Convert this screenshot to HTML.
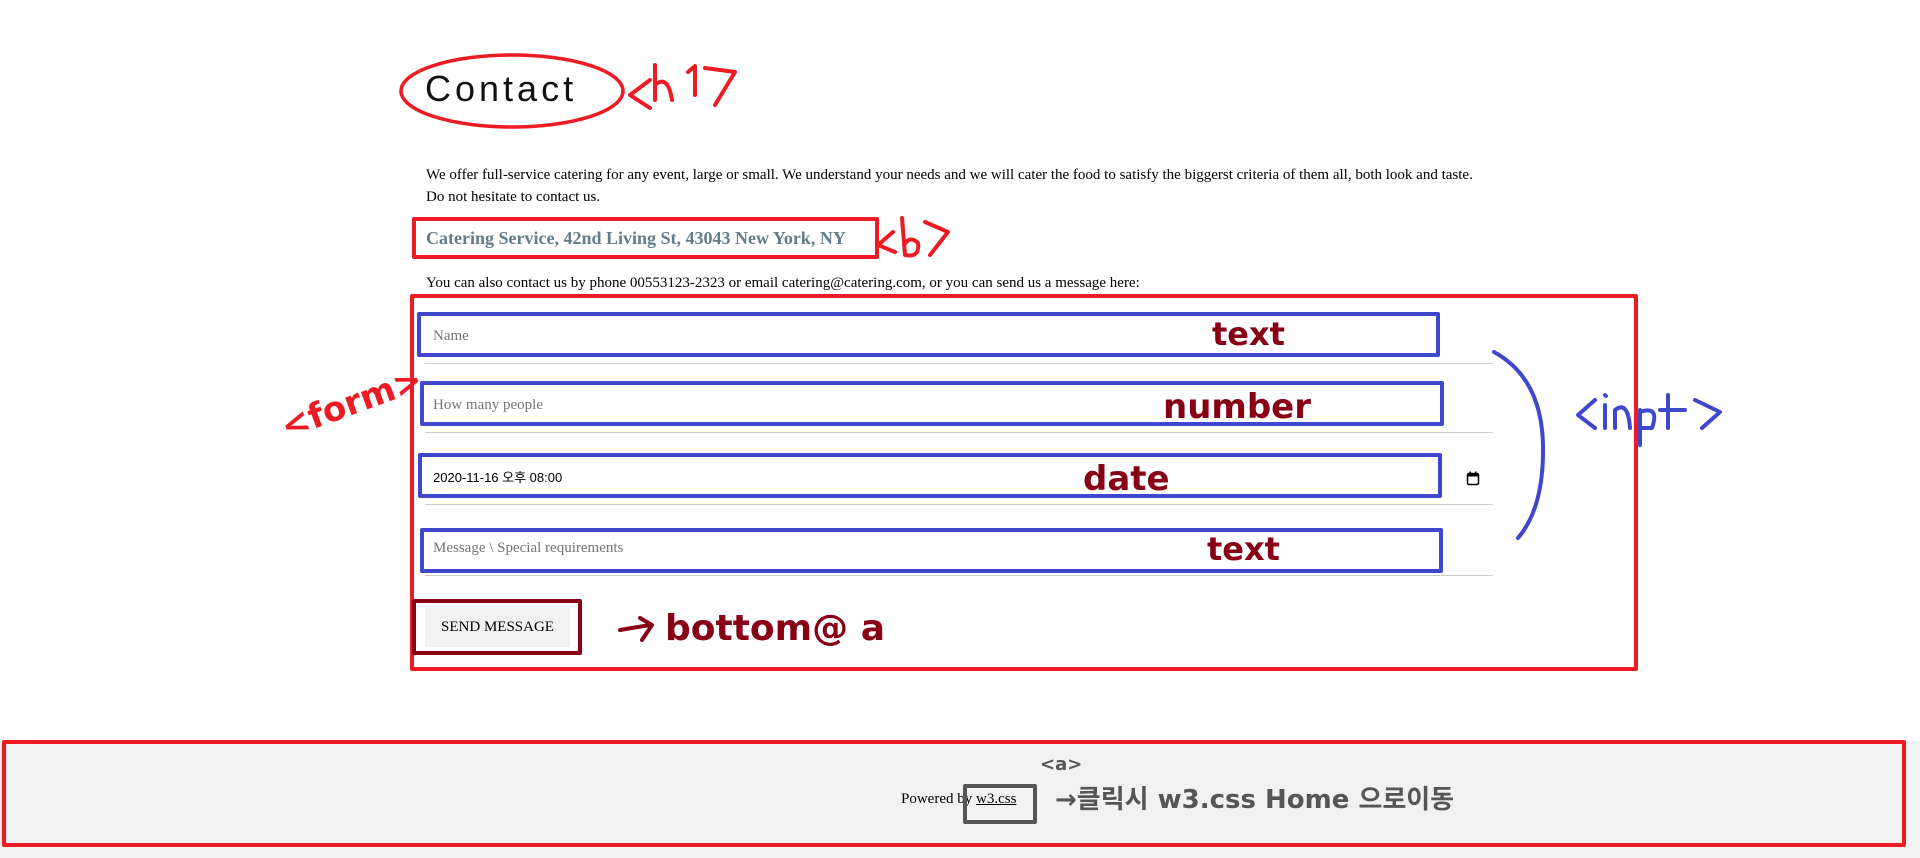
<!DOCTYPE html>
<html><head><meta charset="utf-8"><style>
*{box-sizing:border-box;margin:0;padding:0}
html,body{width:1920px;height:858px;overflow:hidden;background:#fff;font-family:"Liberation Serif","Noto Serif CJK SC",serif;font-size:15px;color:#000}
.abs{position:absolute}
h1{position:absolute;left:425px;top:68px;font-family:"Liberation Sans",sans-serif;font-weight:300;font-size:36px;letter-spacing:4px;color:#111}
.p{position:absolute;left:426px;line-height:22px}
.b{position:absolute;left:426px;top:228px;font-weight:bold;font-size:18px;color:#607d8b}
.in{position:absolute;left:425px;width:1068px;height:39px;border-bottom:1px solid #ccc;padding:0 8px;line-height:22px;color:#757575}
.btn{position:absolute;left:425px;top:608px;width:145px;height:39px;background:#f1f1f1;text-align:center;line-height:39px;font-size:15px}
.foot{position:absolute;left:0;top:741px;width:1920px;height:117px;background:#f1f1f1}
</style></head><body>
<h1>Contact</h1>
<div class="p" style="top:164px">We offer full-service catering for any event, large or small. We understand your needs and we will cater the food to satisfy the biggerst criteria of them all, both look and taste.<br>Do not hesitate to contact us.</div>
<div class="b">Catering Service, 42nd Living St, 43043 New York, NY</div>
<div class="p" style="top:272px">You can also contact us by phone 00553123-2323 or email catering@catering.com, or you can send us a message here:</div>
<div class="in" style="top:325px">Name</div>
<div class="in" style="top:394px">How many people</div>
<div class="in" style="top:466px;color:#000;font-family:'Liberation Sans','Noto Sans CJK KR',sans-serif;font-size:13px;padding-top:1px">2020-11-16 오후 08:00
<svg class="abs" style="left:1041px;top:5px" width="14" height="15" viewBox="0 0 14 15"><rect x="1.5" y="2.5" width="11" height="11" rx="1.5" fill="none" stroke="#000" stroke-width="1.5"/><rect x="1.5" y="2.5" width="11" height="3" fill="#000"/><rect x="3.5" y="0.5" width="1.5" height="3" fill="#000"/><rect x="9" y="0.5" width="1.5" height="3" fill="#000"/></svg></div>
<div class="in" style="top:537px">Message \ Special requirements</div>
<div class="btn">SEND MESSAGE</div>
<div class="foot"><div class="abs" style="left:901px;top:50px">Powered by <span style="text-decoration:underline">w3.css</span></div></div>

<svg class="abs" style="left:0;top:0" width="1920" height="858" viewBox="0 0 1920 858">
<g fill="none" stroke-linecap="round" stroke-linejoin="round">
<ellipse cx="512" cy="91" rx="111" ry="36" stroke="#ed1c24" stroke-width="3.5"/>
<path d="M650 80 L630 95 L650 108 M655 65 L655 100 M655 85 Q668 74 672 100 M688 72 L695 66 L695 95 M705 68 L735 72 L715 105" stroke="#ed1c24" stroke-width="4"/>
<rect x="414" y="219" width="463" height="38" stroke="#ed1c24" stroke-width="4"/>
<path d="M893 232 L878 245 L895 252 M902 218 L905 255 Q920 258 918 243 Q910 235 904 245 M925 222 L948 232 L930 255" stroke="#ed1c24" stroke-width="4"/>
<rect x="412" y="296" width="1224" height="373" stroke="#ed1c24" stroke-width="4"/>
<rect x="419" y="314" width="1019" height="41" stroke="#3f48cc" stroke-width="4"/>
<rect x="422" y="383" width="1020" height="41" stroke="#3f48cc" stroke-width="4"/>
<rect x="420" y="455" width="1020" height="41" stroke="#3f48cc" stroke-width="4"/>
<rect x="422" y="530" width="1019" height="41" stroke="#3f48cc" stroke-width="4"/>
<path d="M1494 352 Q1545 380 1543 455 Q1542 510 1518 538" stroke="#3f48cc" stroke-width="4"/>
<path d="M1595 400 L1578 415 L1595 428 M1605 405 L1605 428 M1605 395 L1606 396 M1615 428 L1615 410 Q1628 400 1630 428 M1640 410 L1640 445 M1640 412 Q1660 405 1652 428 L1640 428 M1668 395 L1668 428 M1660 410 L1685 410 M1695 400 L1720 412 L1702 428" stroke="#3f48cc" stroke-width="4"/>
<rect x="414" y="601" width="166" height="52" stroke="#880015" stroke-width="4"/>
<path d="M620 630 L650 625 M640 618 L652 625 L642 640" stroke="#880015" stroke-width="4"/>
<rect x="965" y="786" width="70" height="36" stroke="#555" stroke-width="4"/>
<rect x="4" y="742" width="1900" height="103" stroke="#ed1c24" stroke-width="4"/>
</g>
<g font-family="DejaVu Sans, sans-serif" font-weight="bold">
<text x="1212" y="345" font-size="32" fill="#880015">text</text>
<text x="1163" y="418" font-size="34" fill="#880015">number</text>
<text x="1083" y="490" font-size="34" fill="#880015">date</text>
<text x="1207" y="560" font-size="32" fill="#880015">text</text>
<text x="665" y="640" font-size="36" fill="#880015">bottom@ a</text>
<text x="1055" y="808" font-size="26" fill="#555" font-family="DejaVu Sans, 'Noto Sans CJK KR', sans-serif">→클릭시   w3.css Home 으로이동</text>
<text x="1040" y="770" font-size="18" fill="#555">&lt;a&gt;</text>
</g>
<text x="275" y="425" font-size="34" fill="#ed1c24" font-family="DejaVu Sans" font-weight="bold" transform="rotate(-20 320 400)">&lt;form&gt;</text>
</svg>
</body></html>
